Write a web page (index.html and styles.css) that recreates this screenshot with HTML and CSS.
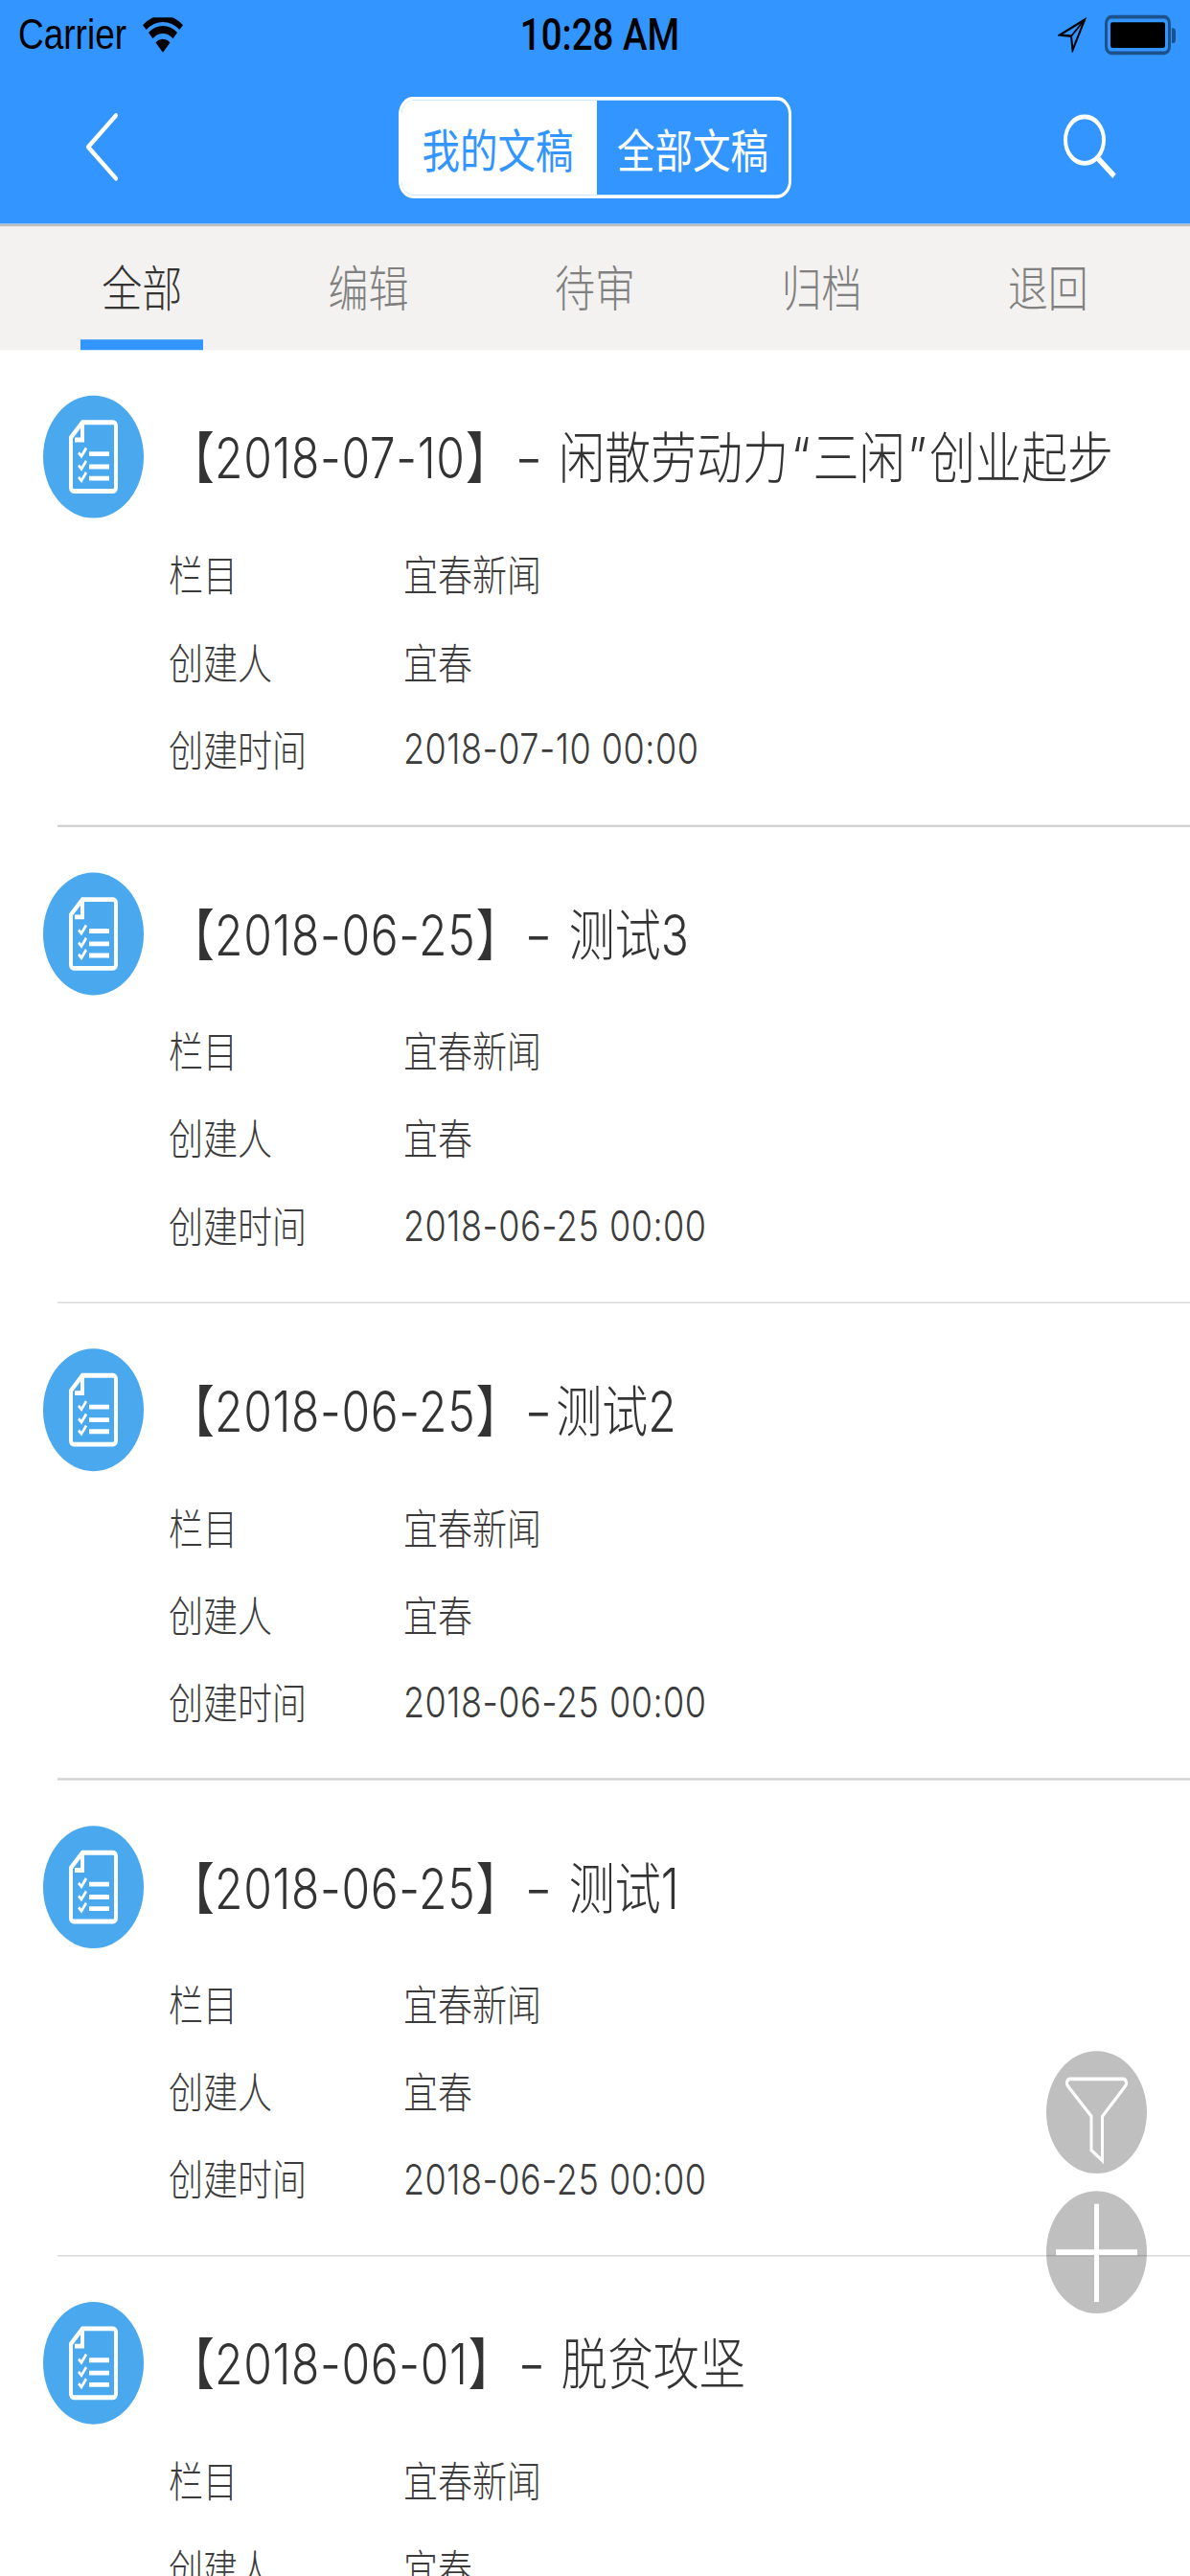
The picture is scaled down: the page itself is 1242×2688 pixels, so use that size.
FILE: index.html
```html
<!DOCTYPE html>
<html lang="zh-CN">
<head>
<meta charset="utf-8">
<title>文稿</title>
<link rel="stylesheet" href="styles.css">
</head>
<body>
<svg class="defs" width="0" height="0" aria-hidden="true">
  <symbol id="doc" viewBox="0 0 105 105">
    <path d="M41 23H73a3 3 0 0 1 3 3V79a3 3 0 0 1-3 3H32a3 3 0 0 1-3-3V36Z" fill="none" stroke="#fff" stroke-width="4"/>
    <path d="M41 23V38H33" fill="none" stroke="#fff" stroke-width="4"/>
    <path d="M37 49l3 3 5-7M37 60l3 3 5-7M37 70l3 3 5-7" fill="none" stroke="#fff" stroke-width="2.6"/>
    <path d="M48 50H69M48 61H69M48 71H69" fill="none" stroke="#fff" stroke-width="4"/>
  </symbol>
</svg>
<div class="page">
  <header class="top">
    <div class="status">
      <div class="status-left">
        <span class="carrier">Carrier</span>
        <svg class="wifi" viewBox="0 0 42 30"><path d="M21 30 13.500 21.500a11 11 0 0 1 15 0ZM10.500 18 6 13a22 22 0 0 1 30 0l-4.500 5a15 15 0 0 0-21 0ZM3.800 10.500 0 6.500a31 31 0 0 1 42 0l-3.800 4a25.500 25.500 0 0 0-34.400 0Z" fill="#000"/></svg>
      </div>
      <span class="time">10:28 AM</span>
      <div class="status-right">
        <svg class="loc" viewBox="0 0 30 30"><path d="M28 2 2 15l12 1 1.500 12Z" fill="none" stroke="#000" stroke-width="2" stroke-linejoin="miter"/><path d="M28 2 14 16" fill="none" stroke="#000" stroke-width="1.500"/></svg>
        <div class="battery"><div class="battery-fill"></div></div>
        <div class="battery-cap"></div>
      </div>
    </div>
    <nav class="nav">
      <svg class="back" viewBox="0 0 36 60"><path d="M33 3 4 30l29 27" fill="none" stroke="#fff" stroke-width="4" stroke-linecap="round" stroke-linejoin="round"/></svg>
      <div class="segment">
        <span class="seg seg-on">我的文稿</span>
        <span class="seg">全部文稿</span>
      </div>
      <svg class="search" viewBox="0 0 56 56"><circle cx="23" cy="22" r="20" fill="none" stroke="#fff" stroke-width="4"/><path d="M36 37 54 53" fill="none" stroke="#fff" stroke-width="5"/></svg>
    </nav>
  </header>
  <div class="tabs">
    <div class="tab tab-on">全部</div>
    <div class="tab">编辑</div>
    <div class="tab">待审</div>
    <div class="tab">归档</div>
    <div class="tab">退回</div>
  </div>
  <main class="list">
    <article class="row">
      <div class="head"><div class="avatar"><svg class="doc"><use href="#doc"/></svg></div><h2 class="title">【<span class="num">2018-07-10</span>】<span class="dash">-</span> 闲散劳动力<span class="q">“</span>三闲<span class="q">”</span>创业起步</h2></div>
      <dl class="meta"><dt>栏目</dt><dd>宜春新闻</dd><dt>创建人</dt><dd>宜春</dd><dt>创建时间</dt><dd class="num">2018-07-10 00:00</dd></dl>
    </article>
    <div class="divider"></div>
    <article class="row">
      <div class="head"><div class="avatar"><svg class="doc"><use href="#doc"/></svg></div><h2 class="title">【<span class="num">2018-06-25</span>】<span class="dash">-</span> 测试3</h2></div>
      <dl class="meta"><dt>栏目</dt><dd>宜春新闻</dd><dt>创建人</dt><dd>宜春</dd><dt>创建时间</dt><dd class="num">2018-06-25 00:00</dd></dl>
    </article>
    <div class="divider"></div>
    <article class="row">
      <div class="head"><div class="avatar"><svg class="doc"><use href="#doc"/></svg></div><h2 class="title">【<span class="num">2018-06-25</span>】<span class="dash">-</span>测试2</h2></div>
      <dl class="meta"><dt>栏目</dt><dd>宜春新闻</dd><dt>创建人</dt><dd>宜春</dd><dt>创建时间</dt><dd class="num">2018-06-25 00:00</dd></dl>
    </article>
    <div class="divider"></div>
    <article class="row">
      <div class="head"><div class="avatar"><svg class="doc"><use href="#doc"/></svg></div><h2 class="title">【<span class="num">2018-06-25</span>】<span class="dash">-</span> 测试1</h2></div>
      <dl class="meta"><dt>栏目</dt><dd>宜春新闻</dd><dt>创建人</dt><dd>宜春</dd><dt>创建时间</dt><dd class="num">2018-06-25 00:00</dd></dl>
    </article>
    <div class="divider"></div>
    <article class="row">
      <div class="head"><div class="avatar"><svg class="doc"><use href="#doc"/></svg></div><h2 class="title">【<span class="num">2018-06-01</span>】<span class="dash">-</span> 脱贫攻坚</h2></div>
      <dl class="meta"><dt>栏目</dt><dd>宜春新闻</dd><dt>创建人</dt><dd>宜春</dd></dl>
    </article>
  </main>
  <div class="fabs">
    <div class="fab"><svg viewBox="0 0 105 105"><path d="M25 24H80a3.500 3.500 0 0 1 2.500 6L58.500 56V94L47 85V56L22.500 30a3.500 3.500 0 0 1 2.500-6Z" fill="none" stroke="#fff" stroke-width="3"/></svg></div>
    <div class="fab"><svg viewBox="0 0 105 105"><path d="M52.500 11V95M10 52.500H95" fill="none" stroke="#fff" stroke-width="5"/></svg></div>
  </div>
</div>
</body>
</html>
```
FILE: styles.css
```css
* { box-sizing: border-box; }
html, body { margin: 0; padding: 0; background: #fff; overflow: hidden; height: 2688px; }
.defs { position: absolute; }
.page {
  position: relative;
  width: 1242px;
  height: 2208px;
  overflow: hidden;
  transform: scaleY(1.21739);
  transform-origin: top left;
  background: #fff;
  font-family: Inter, "Noto Sans CJK SC", sans-serif;
  font-weight: 300;
  color: #333;
}
.top { background: #3395ff; height: 192px; }
.status {
  height: 60px;
  display: grid;
  grid-template-columns: 1fr auto 1fr;
  align-items: center;
  padding: 0 15px 0 19px;
  color: #000;
  font-family: "Liberation Sans", sans-serif;
  font-weight: 400;
}
.status-left { display: flex; align-items: center; gap: 17px; }
.carrier { font-size: 37px; line-height: 60px; }
.wifi { width: 42px; height: 30px; }
.time { font-size: 38.5px; line-height: 60px; margin-left: 6px; font-family: Roboto, sans-serif; font-weight: 500; }
.status-right { display: flex; align-items: center; justify-content: flex-end; }
.loc { width: 30px; height: 30px; margin-right: 19px; }
.battery {
  width: 69px; height: 34px;
  border: 3px solid rgba(0,0,0,.45);
  border-radius: 7px;
  padding: 3px;
}
.battery-fill { width: 100%; height: 100%; background: #000; border-radius: 2px; }
.battery-cap { width: 4px; height: 13px; background: rgba(0,0,0,.45); border-radius: 0 3px 3px 0; margin-left: 1px; }
.nav {
  height: 132px;
  display: grid;
  grid-template-columns: 1fr auto 1fr;
  align-items: center;
}
.back { width: 36px; height: 60px; margin-left: 88px; }
.search { width: 56px; height: 56px; justify-self: end; margin-right: 77px; }
.segment {
  width: 410px; height: 87px;
  display: flex;
  border: 3px solid #fff;
  border-radius: 15px;
  overflow: hidden;
}
.seg {
  flex: 1;
  display: flex; align-items: center; justify-content: center;
  font-family: "Noto Sans CJK SC", sans-serif;
  font-size: 39.5px;
  font-weight: 400;
  color: #fff;
}
.seg-on { flex: none; width: 204px; padding-right: 3px; background: #fff; color: #3395ff; }
.tabs {
  height: 108px;
  display: flex;
  padding: 0 30px;
  background: #f3f2f0;
  border-top: 2px solid #bdbdbd;
}
.tab {
  flex: 1;
  position: relative;
  display: flex; align-items: center; justify-content: center;
  font-family: "Noto Sans CJK SC", sans-serif;
  font-size: 42px;
  padding-bottom: 5px;
  color: #808080;
}
.tab-on { color: #333; }
.tab-on::after {
  content: "";
  position: absolute;
  left: 54px; right: 54px; bottom: 0;
  height: 9px;
  background: #3395ff;
}
.row { height: 407px; padding: 39px 0 0 45px; }
.head { display: flex; align-items: center; height: 105px; }
.avatar { width: 105px; height: 105px; border-radius: 50%; background: #4aa8ee; flex: none; }
.doc { width: 105px; height: 105px; display: block; }
.title {
  margin: 0 0 5px 26px;
  font-size: 48px;
  font-weight: 300;
  color: #333;
  white-space: nowrap;
}
.num { letter-spacing: .014em; }
.dash { display: inline-block; margin: 0 7px; transform: scaleX(1.35); }
.q { margin: 0 3px; }
.meta {
  margin: 11.5px 0 0 131px;
  display: grid;
  grid-template-columns: 245px 1fr;
  grid-auto-rows: 75px;
  align-items: center;
  font-size: 36px;
  color: #3c3c3c;
}
.meta dt, .meta dd { margin: 0 0 5px; }
.meta .num { margin-bottom: 2px; }
.divider { height: 1.5px; margin-left: 60px; background: #d2d2d2; }
.fabs {
  position: absolute;
  right: 45px; top: 1758px;
  display: flex; flex-direction: column; gap: 15px;
}
.fab { width: 105px; height: 105px; border-radius: 50%; background: rgba(0,0,0,.25); }
.fab svg { display: block; width: 105px; height: 105px; }
```
